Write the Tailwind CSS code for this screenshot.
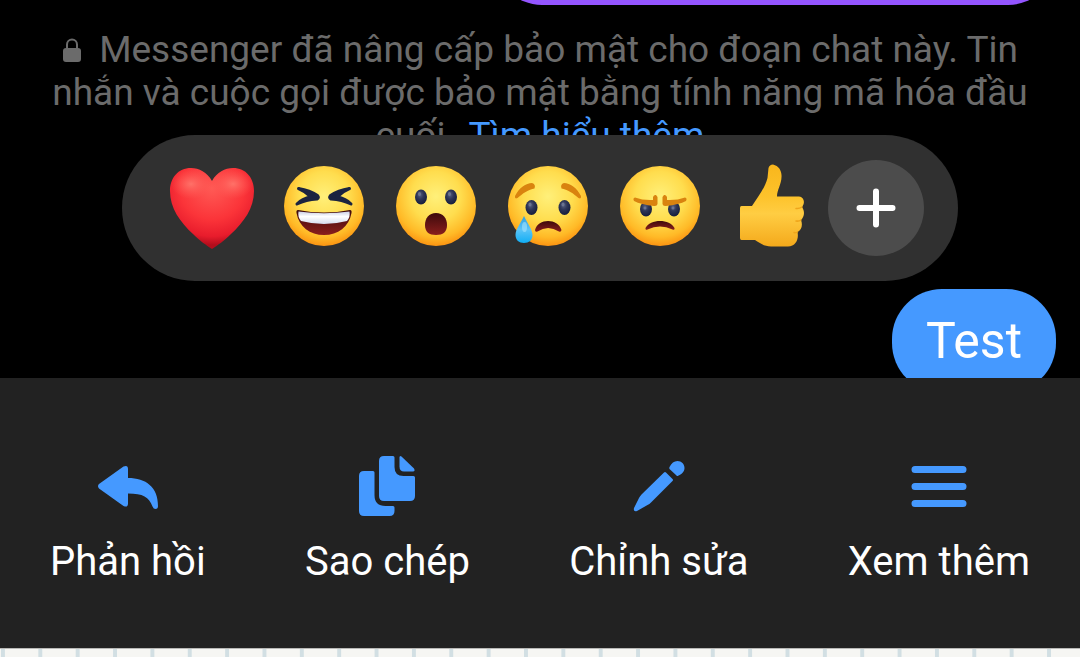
<!DOCTYPE html>
<html lang="vi">

<head>
	<meta charset="UTF-8">
	<meta name="viewport" content="width=device-width, initial-scale=1.0">
	<title>Messenger</title>
	<script src="https://cdn.jsdelivr.net/npm/@tailwindcss/browser@4"></script>
</head>

<body class="min-h-screen flex flex-col overflow-hidden bg-black font-[Roboto,'Noto_Sans',sans-serif]">

	<!-- Shared gradients for the emoji -->
	<svg class="absolute w-0 h-0" aria-hidden="true">
		<defs>
			<radialGradient id="face" cx="50%" cy="38%" r="62%">
				<stop offset="0" stop-color="#fff07a" />
				<stop offset=".5" stop-color="#ffdd4e" />
				<stop offset=".82" stop-color="#ffba27" />
				<stop offset="1" stop-color="#fb9412" />
			</radialGradient>
			<radialGradient id="heart" cx="50%" cy="25%" r="70%">
				<stop offset="0" stop-color="#ff5a55" />
				<stop offset=".55" stop-color="#fb3439" />
				<stop offset=".85" stop-color="#e81c2c" />
				<stop offset="1" stop-color="#b30d1c" />
			</radialGradient>
			<radialGradient id="shine">
				<stop offset="0" stop-color="#ff7168" />
				<stop offset="1" stop-color="#ff5a55" stop-opacity="0" />
			</radialGradient>
			<linearGradient id="mouth" x1="0" y1="0" x2="0" y2="1">
				<stop offset="0" stop-color="#3d0a0c" />
				<stop offset="1" stop-color="#8a1e1c" />
			</linearGradient>
			<linearGradient id="teeth" x1="0" y1="0" x2="0" y2="1">
				<stop offset="0" stop-color="#c9cfe6" />
				<stop offset=".4" stop-color="#ffffff" />
				<stop offset="1" stop-color="#d5dbef" />
			</linearGradient>
			<radialGradient id="eye" cx="42%" cy="35%" r="60%">
				<stop offset="0" stop-color="#56607f" />
				<stop offset=".5" stop-color="#2d3557" />
				<stop offset="1" stop-color="#1a2140" />
			</radialGradient>
			<linearGradient id="tear" x1="0" y1="0" x2="0" y2="1">
				<stop offset="0" stop-color="#2f9fe0" />
				<stop offset=".5" stop-color="#5cc4f7" />
				<stop offset="1" stop-color="#10aef5" />
			</linearGradient>
			<linearGradient id="thumb" x1="0" y1="0" x2="0" y2="1">
				<stop offset="0" stop-color="#f9b61c" />
				<stop offset=".4" stop-color="#fdc32c" />
				<stop offset=".6" stop-color="#ffcd43" />
				<stop offset="1" stop-color="#f4a91b" />
			</linearGradient>
		</defs>
	</svg>

	<main class="px-6">
		<!-- Previous message, scrolled almost out of view -->
		<div class="flex h-[5px] items-end justify-end overflow-hidden">
			<div class="h-24 w-[562px] shrink-0 rounded-[48px] bg-[#9455ff]"></div>
		</div>

		<p class="mt-[23px] px-6 text-center text-[37px] leading-[43px] text-[#6b6b6b]">
			<svg class="mr-2 inline h-6 w-5 align-baseline" viewBox="0 0 20 24" aria-hidden="true">
				<path d="M5 12V6.500a5 5 0 0 1 10 0V12" fill="none" stroke="#6b6b6b" stroke-width="2" />
				<rect x="1" y="10" width="18" height="14" rx="3" fill="#6b6b6b" />
			</svg>
			Messenger đã nâng cấp bảo mật cho đoạn chat này. Tin nhắn và cuộc gọi được bảo mật bằng tính năng mã hóa đầu cuối. <a href="#" class="ml-1 text-[#4599ff]">Tìm hiểu thêm</a>
		</p>

		<!-- Reactions -->
		<div class="relative mx-auto -mt-[22px] flex w-fit items-center rounded-full bg-[#303030] px-[34px] py-[25px]">
			<button type="button" aria-label="Yêu thích" class="flex w-28 justify-center">
				<svg class="size-24" viewBox="0 0 96 96">
					<path d="M48 21C43 12 35 8 27 8 14 8 6 18 6 31c0 17 10 31 23 43 7 7 13 11 19 15 6-4 12-8 19-15 13-12 23-26 23-43C90 18 82 8 69 8c-8 0-16 4-21 13z" fill="url(#heart)" />
					<ellipse cx="27" cy="24" rx="20" ry="15" fill="url(#shine)" />
					<ellipse cx="69" cy="24" rx="20" ry="15" fill="url(#shine)" />
				</svg>
			</button>
			<button type="button" aria-label="Haha" class="flex w-28 justify-center">
				<svg class="size-24" viewBox="0 0 96 96">
					<circle cx="48" cy="46" r="40" fill="url(#face)" />
					<g fill="#1b2440" stroke="#1b2440" stroke-width="3" stroke-linejoin="round">
						<path d="M22.500 28.500 Q34 30.500 41.500 35.500 Q43.500 38 41 39 Q30 39.500 21 44 Q26 38.500 35 37 Q30 31.500 22.500 28.500z" />
						<path d="M73.500 28.500 Q62 30.500 54.500 35.500 Q52.500 38 55 39 Q66 39.500 75 44 Q70 38.500 61 37 Q66 31.500 73.500 28.500z" />
					</g>
					<path d="M22 50 Q48 55 74 50 Q76 50 75.500 53 C73 67 62 75 48 75 C34 75 23 67 20.500 53 Q20 50 22 50z" fill="url(#mouth)" />
					<path d="M22.500 51.500 Q48 55 73.500 51.500 Q74.500 57 71 61 Q48 67 25 61 Q21.500 57 22.500 51.500z" fill="url(#teeth)" />
				</svg>
			</button>
			<button type="button" aria-label="Wow" class="flex w-28 justify-center">
				<svg class="size-24" viewBox="0 0 96 96">
					<circle cx="48" cy="46" r="40" fill="url(#face)" />
					<ellipse cx="33" cy="37" rx="6" ry="7.500" fill="url(#eye)" />
					<ellipse cx="63" cy="37" rx="6" ry="7.500" fill="url(#eye)" />
					<ellipse cx="31.500" cy="34" rx="1.500" ry="2" fill="#6a7391" />
					<ellipse cx="61.500" cy="34" rx="1.500" ry="2" fill="#6a7391" />
					<path d="M48 53 C55 53 59 58 59 65 C59 72 55 75 48 75 C41 75 37 72 37 65 C37 58 41 53 48 53z" fill="url(#mouth)" />
				</svg>
			</button>
			<button type="button" aria-label="Buồn" class="flex w-28 justify-center">
				<svg class="size-24" viewBox="0 0 96 96">
					<circle cx="48" cy="46" r="40" fill="url(#face)" />
					<g fill="#d9830f">
						<path d="M15 36 C19 28 26 23 32 23 Q36 24 34.500 28.500 C29 29 22 34 17.500 38 Q14.500 39.500 15 36z" />
						<path d="M81 36 C77 28 70 23 64 23 Q60 24 61.500 28.500 C67 29 74 34 78.500 38 Q81.500 39.500 81 36z" />
					</g>
					<ellipse cx="31.500" cy="47.500" rx="6" ry="7.500" fill="url(#eye)" />
					<ellipse cx="64.500" cy="47.500" rx="6" ry="7.500" fill="url(#eye)" />
					<ellipse cx="30" cy="44.500" rx="1.500" ry="2" fill="#6a7391" />
					<ellipse cx="63" cy="44.500" rx="1.500" ry="2" fill="#6a7391" />
					<path d="M35 70 C38 58 58 58 61.500 70 Q61 72.500 59 71.500 Q48 64.500 37.500 71.500 Q35 72.500 35 70z" fill="url(#mouth)" />
					<path d="M24 56 C27 63 32.500 69 32.500 75 C32.500 80 29 83 24 83 C19 83 15.500 80 15.500 75 C15.500 69 21 63 24 56z" fill="url(#tear)" />
					<ellipse cx="24.500" cy="67" rx="2.500" ry="5" fill="#a5e2fd" opacity=".6" />
				</svg>
			</button>
			<button type="button" aria-label="Phẫn nộ" class="flex w-28 justify-center">
				<svg class="size-24" viewBox="0 0 96 96">
					<circle cx="48" cy="46" r="40" fill="url(#face)" />
					<ellipse cx="34" cy="49" rx="6" ry="7.500" fill="url(#eye)" />
					<ellipse cx="62" cy="49" rx="6" ry="7.500" fill="url(#eye)" />
					<ellipse cx="33" cy="48" rx="1.500" ry="1.500" fill="#6a7391" />
					<ellipse cx="61" cy="48" rx="1.500" ry="1.500" fill="#6a7391" />
					<g fill="#d9830f">
						<path d="M23 37.500 Q31 40.500 41 40 V37 Q42 34.500 44 35 L45.500 37 V44 Q45 46.500 42 46 Q29 44.500 22 41 Q20.500 38 23 37.500z" />
						<path d="M73 37.500 Q65 40.500 55 40 V37 Q54 34.500 52 35 L50.500 37 V44 Q51 46.500 54 46 Q67 44.500 74 41 Q75.500 38 73 37.500z" />
					</g>
					<path d="M33.500 68 C38 58.500 58 58.500 62.500 68 Q63 70.500 60.500 69.500 Q48 63.500 35.500 69.500 Q33 70.500 33.500 68z" fill="url(#mouth)" />
				</svg>
			</button>
			<button type="button" aria-label="Thích" class="flex w-28 justify-center">
				<svg class="size-24" viewBox="0 0 96 96">
					<path d="M17.500 46 H28 C34 37 41 28 43.500 18 L44.500 8 Q45.500 4.500 49 4.500 C55 6 58 11 57.500 17 C57.500 24 53 30 53 36.500 H75 C80 37 81.500 43 78 47 C81 51 80.500 57 77 60 C79 65 77.500 70 73.500 72 C75 79 72 86 64 86.500 H47 C40 86.500 36 83 31 80 H17.500 Q16 80 16 78 V48 Q16 46 17.500 46z" fill="url(#thumb)" />
					<path d="M78 47 Q75 49 72 48.500 M77 60 Q75 61.500 72 61 M73.500 72 Q72 73 70 72.500" fill="none" stroke="#efa51b" stroke-width="1.500" stroke-linecap="round" />
				</svg>
			</button>
			<button type="button" aria-label="Thêm cảm xúc" class="flex size-24 items-center justify-center rounded-full bg-[#4c4c4c]">
				<svg class="size-10" viewBox="0 0 40 40" fill="none" stroke="#fff" stroke-width="6" stroke-linecap="round">
					<path d="M20 3.500v33M3.500 20h33" />
				</svg>
			</button>
		</div>

		<!-- Selected message -->
		<div class="mt-2 flex justify-end">
			<div class="rounded-[50px] bg-[#4599ff] px-[34px] py-[22px] text-[50px] leading-[60px] text-white">Test</div>
		</div>
	</main>

	<!-- Message actions -->
	<nav class="relative -mt-[15px] flex justify-between bg-[#222222] px-[50px] pt-[76px] pb-[63px] text-[40px] leading-[47px] text-white">
		<button type="button" class="flex flex-col items-center gap-5">
			<svg class="size-16" viewBox="0 0 64 64" fill="#4599ff" aria-hidden="true">
				<path d="M3 30 L27.500 12.500 Q32 10.500 32 15 V24 C50 24 62 33 62 52 Q62 55 59.500 55 Q57.500 55 56.500 52.500 C53 43 47 39.500 32 39.500 V49.500 Q32 54 27.500 52 L3 34.500 Q1 32 3 30z" />
			</svg>
			Phản hồi
		</button>
		<button type="button" class="flex flex-col items-center gap-5">
			<svg class="size-16" viewBox="0 0 64 64" fill="#4599ff" aria-hidden="true">
				<path d="M9 17 H18 Q19.500 17 19.500 18.500 V41 Q19.500 52 30.500 52 H38 Q39.500 52 39.500 53.500 V57 Q39.500 62 34.500 62 H9 Q4 62 4 57 V22 Q4 17 9 17z" />
				<path d="M29 2 H38 Q39.500 2 39.500 3.500 V13 Q39.500 22 48.500 22 H58.500 Q60 22 60 23.500 V42 Q60 47 55 47 H29 Q24 47 24 42 V7 Q24 2 29 2z" />
				<path d="M44.500 3.500 Q44.500 1 46.500 2.500 L59 14.500 Q60.500 17.500 58 17.500 H49 Q44.500 17.500 44.500 12.500z" />
			</svg>
			Sao chép
		</button>
		<button type="button" class="flex flex-col items-center gap-5">
			<svg class="size-16" viewBox="0 0 64 64" fill="#4599ff" aria-hidden="true">
				<path d="M37 18.500 Q38 17.500 39 18.500 L45.500 25 Q46.500 26 45.500 27 L24 48.500 Q22.500 50 20.500 51 L10 57 Q6 58 7 54 L12 44 Q13 42 14.500 40.500z" />
				<path d="M42.500 13 C44.500 9 47 7 50.500 7 C54.500 7 57.500 10 57.500 14 C57.500 17.500 55 20 51.500 21.500 Q50.500 22.500 49.500 21.500 L42.500 15 Q42 14 42.500 13z" />
			</svg>
			Chỉnh sửa
		</button>
		<button type="button" class="flex flex-col items-center gap-5">
			<svg class="size-16" viewBox="0 0 64 64" fill="none" stroke="#4599ff" stroke-width="7" stroke-linecap="round" aria-hidden="true">
				<path d="M8 15.500h48M8 32.500h48M8 49.500h48" />
			</svg>
			Xem thêm
		</button>
	</nav>

	<!-- Ruled paper under the sheet -->
	<div class="grow border-t border-[#b9b9b7] bg-[#f6f6f3] bg-[linear-gradient(90deg,transparent_1px,#d2dfe3_1px,#d2dfe3_5px,transparent_5px)] bg-[length:3.46%_100%]"></div>

</body>

</html>
